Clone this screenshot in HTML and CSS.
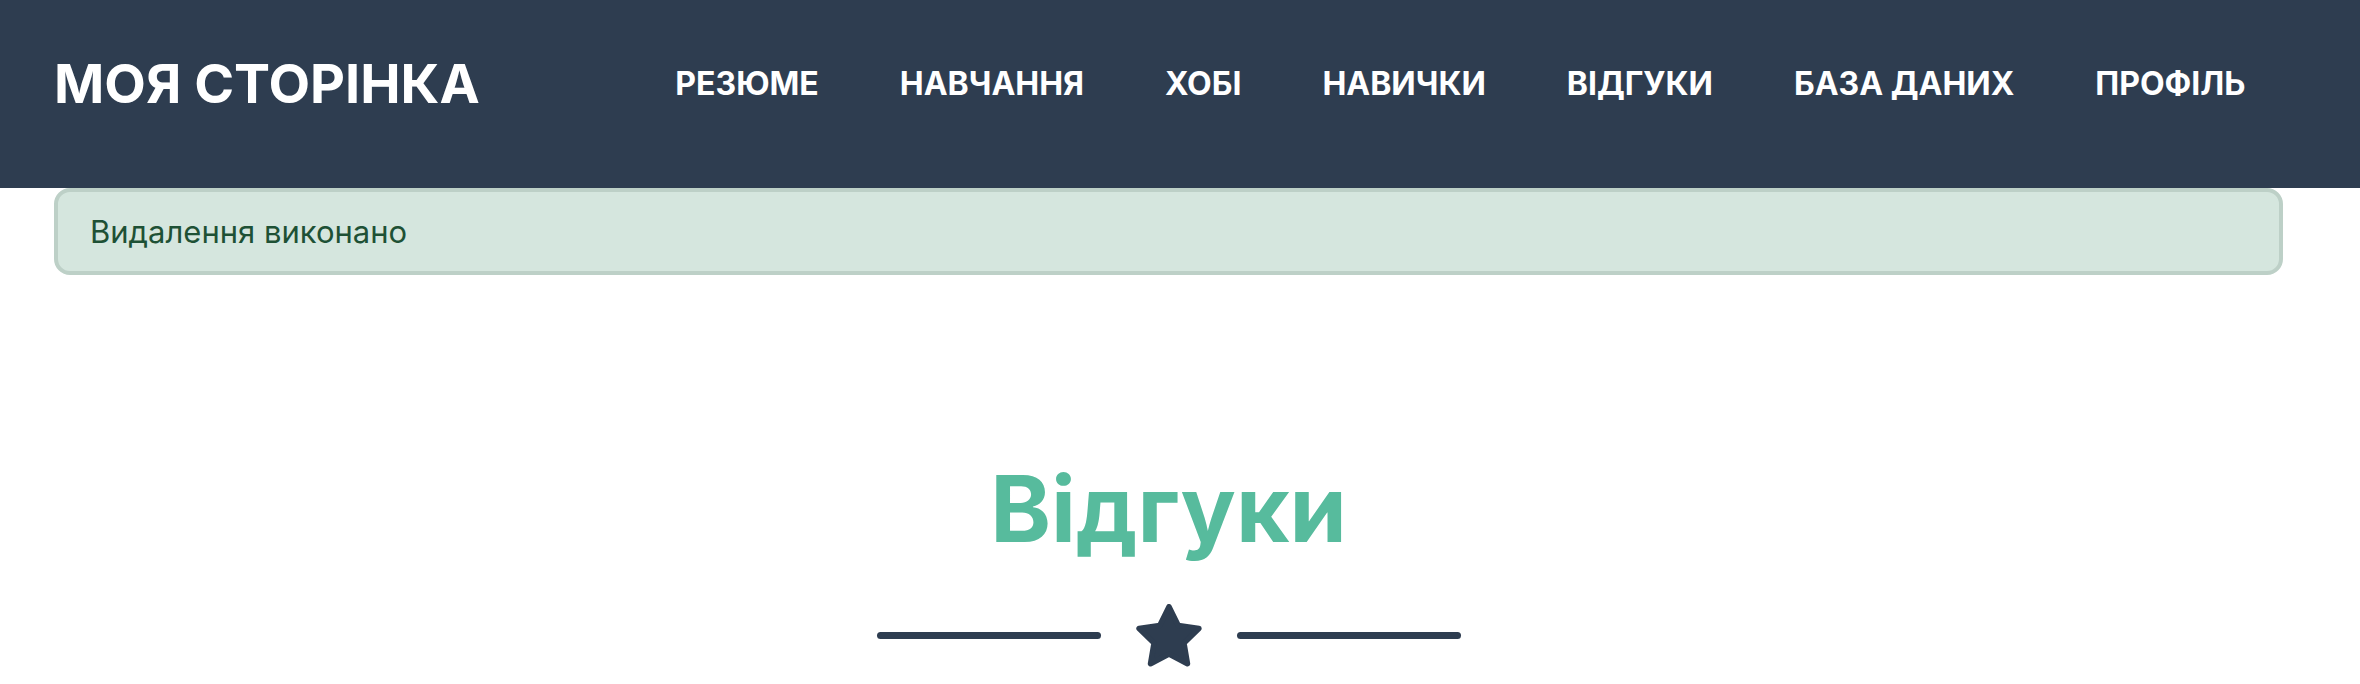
FILE: index.html
```html
<!DOCTYPE html>
<html lang="uk">
<head>
<meta charset="utf-8">
<title>Моя сторінка — Відгуки</title>
<link rel="stylesheet" href="styles.css">
</head>
<body>
<header class="site-header">
  <div class="header-inner">
    <a class="logo" href="#">МОЯ СТОРІНКА</a>
    <nav class="main-nav">
      <a href="#">РЕЗЮМЕ</a>
      <a href="#">НАВЧАННЯ</a>
      <a href="#">ХОБІ</a>
      <a href="#">НАВИЧКИ</a>
      <a href="#">ВІДГУКИ</a>
      <a href="#">БАЗА ДАНИХ</a>
      <a href="#">ПРОФІЛЬ</a>
    </nav>
  </div>
</header>
<main class="content">
  <div class="alert">Видалення виконано</div>
  <section class="reviews">
    <h1 class="reviews-title">Відгуки</h1>
    <div class="divider">
      <span class="divider-line"></span>
      <svg class="divider-star" viewBox="2 2 96 92" width="66" height="63" aria-hidden="true">
        <polygon points="50,6 63.5,33.4 93.7,37.8 71.9,59.1 77,89.2 50,75 23,89.2 28.1,59.1 6.3,37.8 36.5,33.4" fill="#2e3d50" stroke="#2e3d50" stroke-width="8" stroke-linejoin="round"/>
      </svg>
      <span class="divider-line"></span>
    </div>
  </section>
</main>
</body>
</html>
```
FILE: styles.css
```css
* {
  box-sizing: border-box;
}

html, body {
  margin: 0;
  padding: 0;
  background: #ffffff;
  font-family: Inter, Roboto, "Noto Sans", sans-serif;
}

.site-header {
  background: #2e3d50;
  height: 188px;
}

.header-inner {
  height: 100%;
  display: flex;
  align-items: center;
  justify-content: space-between;
  padding: 0 74px 20px 54px;
}

.logo {
  color: #ffffff;
  text-decoration: none;
  font-size: 54px;
  font-weight: 700;
  line-height: 1.2;
}

.main-nav {
  display: flex;
  align-items: center;
}

.main-nav a {
  color: #ffffff;
  text-decoration: none;
  font-size: 32px;
  font-weight: 700;
  line-height: 1.2;
  padding: 0 40.5px;
}

.content {
  padding: 0 77px 0 54px;
}

.alert {
  background: #d5e6de;
  border: 4px solid #bdd0c7;
  border-radius: 16px;
  color: #1e5135;
  font-size: 31px;
  line-height: 45px;
  padding: 17px 32px;
}

.reviews {
  display: flex;
  flex-direction: column;
  align-items: center;
  padding-top: 179px;
}

.reviews-title {
  margin: 0;
  color: #57bb9d;
  font-size: 92px;
  font-weight: 700;
  line-height: 1.2;
}

.divider {
  display: flex;
  align-items: center;
  gap: 35px;
  margin-top: 40px;
}

.divider-line {
  display: block;
  width: 224px;
  height: 7px;
  border-radius: 4px;
  background: #2e3d50;
}

.divider-star {
  display: block;
}
```
